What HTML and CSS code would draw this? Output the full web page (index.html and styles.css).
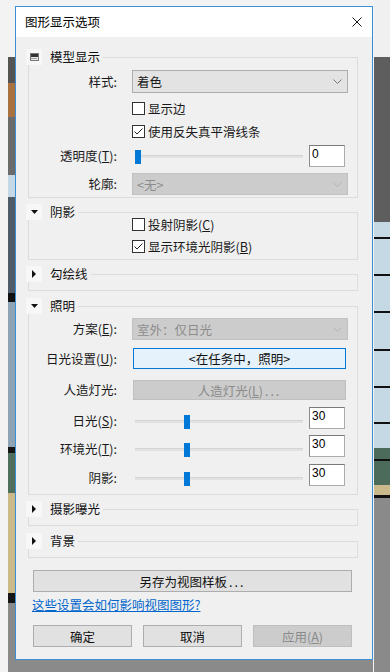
FILE: index.html
```html
<!DOCTYPE html>
<html>
<head>
  <meta charset="utf-8">
  <title>图形显示选项</title>
  <link rel="stylesheet" href="styles.css">
</head>
<body>
  <div class="desk">
    <div class="photo-left"></div>

    <div class="dialog">
      <div class="title-bar">
        <span class="title">图形显示选项</span>
        <svg class="close" width="10" height="10" viewBox="0 0 10 10">
          <path d="M0.5 0.5 L9.5 9.5 M9.5 0.5 L0.5 9.5" stroke="#1a1a1a" stroke-width="1" fill="none"/>
        </svg>
      </div>

      <!-- 模型显示 -->
      <div class="group model">
        <div class="group-head">
          <span class="toggle">
            <svg width="9" height="8" viewBox="0 0 9 8">
              <rect x="0.5" y="0.5" width="8" height="7" fill="#e8e8e8" stroke="#777"/>
              <rect x="1" y="1" width="7" height="3" fill="#333"/>
              <path d="M1.5 5.5 H7.5" stroke="#555" stroke-dasharray="1 1"/>
            </svg>
          </span>
          <span class="name">模型显示</span>
        </div>
        <div class="row style-row">
          <span class="lbl">样式:</span>
          <div class="select">
            <span>着色</span>
            <svg width="9" height="5" viewBox="0 0 9 5"><polyline points="0.5,0.5 4.5,4.5 8.5,0.5" stroke="#7a7a7a" fill="none"/></svg>
          </div>
        </div>
        <div class="row check edges-row">
          <span class="box"></span>
          <span>显示边</span>
        </div>
        <div class="row check smooth-row">
          <span class="box">
            <svg width="11" height="11" viewBox="0 0 11 11"><polyline points="1.5,5.5 4,8 9.5,2.5" stroke="#222" fill="none"/></svg>
          </span>
          <span>使用反失真平滑线条</span>
        </div>
        <div class="row alpha-row">
          <span class="lbl">透明度(<u>T</u>):</span>
          <div class="slider">
            <input type="range" min="0" max="100" value="0">
            <input class="num" type="text" value="0">
          </div>
        </div>
        <div class="row outline-row">
          <span class="lbl">轮廓:</span>
          <div class="select off">
            <span>&lt;无&gt;</span>
            <svg width="9" height="5" viewBox="0 0 9 5"><polyline points="0.5,0.5 4.5,4.5 8.5,0.5" stroke="#b4b4b4" fill="none"/></svg>
          </div>
        </div>
      </div>

      <!-- 阴影 -->
      <div class="group">
        <div class="group-head">
          <span class="toggle">
            <svg width="7" height="4" viewBox="0 0 7 4"><polygon points="0,0 7,0 3.5,4" fill="#111"/></svg>
          </span>
          <span class="name">阴影</span>
        </div>
        <div class="row check">
          <span class="box"></span>
          <span>投射阴影(<u>C</u>)</span>
        </div>
        <div class="row check">
          <span class="box">
            <svg width="11" height="11" viewBox="0 0 11 11"><polyline points="1.5,5.5 4,8 9.5,2.5" stroke="#222" fill="none"/></svg>
          </span>
          <span>显示环境光阴影(<u>B</u>)</span>
        </div>
      </div>

      <!-- 勾绘线 -->
      <div class="group folded">
        <div class="group-head">
          <span class="toggle">
            <svg width="4" height="8" viewBox="0 0 4 8"><polygon points="0,0 4,4 0,8" fill="#111"/></svg>
          </span>
          <span class="name">勾绘线</span>
        </div>
      </div>

      <!-- 照明 -->
      <div class="group lighting">
        <div class="group-head">
          <span class="toggle">
            <svg width="7" height="4" viewBox="0 0 7 4"><polygon points="0,0 7,0 3.5,4" fill="#111"/></svg>
          </span>
          <span class="name">照明</span>
        </div>
        <div class="row scheme-row">
          <span class="lbl">方案(<u>E</u>):</span>
          <div class="select off">
            <span>室外：仅日光</span>
            <svg width="9" height="5" viewBox="0 0 9 5"><polyline points="0.5,0.5 4.5,4.5 8.5,0.5" stroke="#b4b4b4" fill="none"/></svg>
          </div>
        </div>
        <div class="row sun-row">
          <span class="lbl">日光设置(<u>U</u>):</span>
          <div class="btn sun">&lt;在任务中，照明&gt;</div>
        </div>
        <div class="row lamp-row">
          <span class="lbl">人造灯光:</span>
          <div class="btn off">人造灯光(<u>L</u>)<span class="dots">...</span></div>
        </div>
        <div class="row low first-low">
          <span class="lbl">日光(<u>S</u>):</span>
          <div class="slider">
            <input type="range" min="0" max="100" value="30">
            <input class="num" type="text" value="30">
          </div>
        </div>
        <div class="row low ambient-row">
          <span class="lbl">环境光(<u>T</u>):</span>
          <div class="slider">
            <input type="range" min="0" max="100" value="30">
            <input class="num" type="text" value="30">
          </div>
        </div>
        <div class="row low shadow-row">
          <span class="lbl">阴影:</span>
          <div class="slider">
            <input type="range" min="0" max="100" value="30">
            <input class="num" type="text" value="30">
          </div>
        </div>
      </div>

      <!-- 摄影曝光 -->
      <div class="group folded">
        <div class="group-head">
          <span class="toggle">
            <svg width="4" height="8" viewBox="0 0 4 8"><polygon points="0,0 4,4 0,8" fill="#111"/></svg>
          </span>
          <span class="name">摄影曝光</span>
        </div>
      </div>

      <!-- 背景 -->
      <div class="group folded background">
        <div class="group-head">
          <span class="toggle">
            <svg width="4" height="8" viewBox="0 0 4 8"><polygon points="0,0 4,4 0,8" fill="#111"/></svg>
          </span>
          <span class="name">背景</span>
        </div>
      </div>

      <div class="btn save">另存为视图样板<span class="dots">...</span></div>

      <a class="help" href="#">这些设置会如何影响视图图形?</a>

      <div class="footer">
        <div class="btn">确定</div>
        <div class="btn">取消</div>
        <div class="btn off">应用(<u>A</u>)</div>
      </div>
    </div>

    <div class="photo-right"></div>
  </div>
</body>
</html>
```

FILE: styles.css
```css
* {
  box-sizing: border-box;
}

body {
  margin: 0;
  font-family: "Noto Sans CJK SC", "Microsoft YaHei", sans-serif;
  font-size: 12.5px;
  color: #1a1a1a;
  background-color: #f3f3f3;
}

.desk {
  display: flex;
  height: 672px;
  overflow: hidden;
}

/* the desktop behind the dialog */
.photo-left {
  width: 7px;
  margin-left: 8px;
  background: linear-gradient(to bottom,
    #f3f3f3 0 57px,
    #545454 57px 83px,
    #a9713f 83px 117px,
    #6b6b6b 117px 175px,
    #c4d8e6 175px 197px,
    #505d68 197px 293px,
    #111 293px 302px,
    #8ea3b3 302px 447px,
    #151515 447px 453px,
    #4f6e5c 453px 493px,
    #cbb987 493px 593px,
    #161616 593px 603px,
    #8a8a8a 603px);
}

.photo-right {
  flex: 1;
  margin-left: 1px;
  background: linear-gradient(to bottom,
    #f0f0f0 0 57px,
    #5e5e5e 57px 222px,
    #c5d9e4 222px 237px, #111 237px 239px,
    #c5d9e4 239px 274px, #111 274px 276px,
    #c5d9e4 276px 311px, #111 311px 313px,
    #c5d9e4 313px 349px, #111 349px 351px,
    #c5d9e4 351px 386px, #111 386px 388px,
    #c5d9e4 388px 422px, #111 422px 424px,
    #c5d9e4 424px 448px,
    #4c6b5a 448px 459px, #111 459px 461px,
    #4c6b5a 461px 485px,
    #c9b98b 485px 495px,
    #111 495px 498px,
    #8a8a8a 498px);
}

.dialog {
  width: 358px;
  margin-top: 6px;
  align-self: flex-start;
  padding-bottom: 12px;
  background-color: #f0f0f0;
  border: 1px solid #3a8fd4;
  box-shadow: 0 14px 0 #8a8a8a;
}

.title-bar {
  display: flex;
  align-items: center;
  justify-content: space-between;
  height: 30px;
  padding: 0 10px 0 9px;
  background-color: #fff;
}

.title {
  line-height: 16px;
  color: #000;
}

/* group boxes */
.group {
  margin: 14px 14px 0 12px;
  padding: 0 9px 2px 0;
  border: 1px solid #dcdcdc;
}

.group.model {
  margin-top: 20px;
}

.group.lighting {
  margin-top: 15px;
  padding-bottom: 8px;
}

.group.background {
  margin-top: 15px;
}

.group.folded {
  height: 17px;
  padding: 0;
}

.group-head {
  display: flex;
  align-items: center;
  width: max-content;
  height: 16px;
  margin: -9px 0 -7px -3px;
  padding-right: 3px;
  background-color: #f0f0f0;
}

.toggle {
  display: flex;
  align-items: center;
  justify-content: center;
  width: 16px;
  height: 16px;
  background-color: #f7f7f7;
}

.group-head .name {
  margin-left: 8px;
  line-height: 16px;
  color: #111;
}

/* rows */
.row {
  display: flex;
  align-items: center;
  height: 22px;
}

.row.check {
  padding-left: 103px;
}

.style-row { margin-top: 12px; height: 23px; }
.edges-row { margin-top: 4px; }
.smooth-row { margin-top: 1px; }
.alpha-row { margin-top: 3px; }
.outline-row { margin-top: 6px; }

.scheme-row { margin-top: 11px; }
.sun-row { margin-top: 8px; height: 21px; }
.lamp-row { margin-top: 11px; height: 20px; }
.first-low { margin-top: 7px; }
.ambient-row { margin-top: 6px; }
.shadow-row { margin-top: 7px; }

.lbl {
  flex: none;
  width: 88px;
  margin-right: 15px;
  text-align: right;
  white-space: nowrap;
  line-height: 16px;
}

.row.low .lbl,
.row.low input[type="range"] {
  margin-top: 6px;
}

.box {
  display: flex;
  align-items: center;
  justify-content: center;
  width: 13px;
  height: 13px;
  margin-right: 3px;
  border: 1px solid #333;
  background-color: #fff;
}

/* dropdowns */
.select {
  display: flex;
  align-items: center;
  justify-content: space-between;
  width: 216px;
  height: 100%;
  padding: 0 5px 0 4px;
  background-color: #e3e3e3;
  border: 1px solid #adadad;
}

.select.off {
  background-color: #cccccc;
  border-color: #c2c2c2;
  color: #8c8c8c;
}

/* sliders */
.slider {
  display: flex;
  align-items: center;
  width: 216px;
  height: 100%;
}

.slider input[type="range"] {
  -webkit-appearance: none;
  appearance: none;
  flex: 1;
  min-width: 0;
  height: 14px;
  margin: 0 6px 0 3px;
  background: transparent;
}

.slider input[type="range"]::-webkit-slider-runnable-track {
  height: 3px;
  background-color: #e2e2e2;
  border-top: 1px solid #d4d4d4;
}

.slider input[type="range"]::-webkit-slider-thumb {
  -webkit-appearance: none;
  width: 6px;
  height: 14px;
  margin-top: -6px;
  background-color: #0078d7;
  border: none;
}

.slider .num {
  flex: none;
  width: 36px;
  height: 22px;
  margin: 0 3px 0 0;
  padding: 0 2px 4px;
  font: 12px "Liberation Sans", Arial, sans-serif;
  color: #000;
  background-color: #fff;
  border: 1px solid #acacac;
  border-top-color: #7a7a7a;
  border-left-color: #8a8a8a;
  outline: none;
}

/* buttons */
.btn {
  display: flex;
  align-items: center;
  justify-content: center;
  height: 22px;
  background-color: #e1e1e1;
  border: 1px solid #adadad;
  color: #111;
}

.btn .dots {
  margin-left: 2px;
  letter-spacing: 2px;
}

.row .btn {
  width: 213px;
  height: 100%;
  margin-left: 1px;
}

.btn.sun {
  background-color: #e5f1fb;
  border-color: #0078d7;
}

.btn.off {
  background-color: #cccccc;
  border-color: #bfbfbf;
  color: #8a8a8a;
}

.btn.save {
  margin: 12px 20px 0 17px;
}

.help {
  display: block;
  width: max-content;
  margin: 5px 0 0 16px;
  line-height: 16px;
  color: #0066cc;
  text-decoration: underline;
}

.footer {
  display: flex;
  gap: 11px;
  margin: 12px 20px 0 17px;
}

.footer .btn {
  flex: 1;
}
```
